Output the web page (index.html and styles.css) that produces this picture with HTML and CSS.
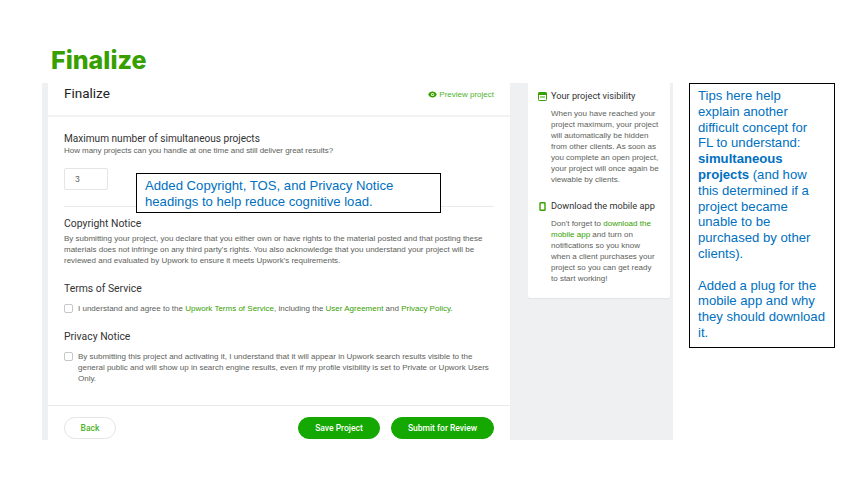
FILE: index.html
```html
<!DOCTYPE html>
<html lang="en">
  <head>
    <meta charset="UTF-8" />
    <meta name="viewport" content="width=device-width, initial-scale=1.0" />
    <title>Finalize</title>
    <link rel="stylesheet" href="styles.css">
  </head>
  <body>
    <div class="slide">
      <h1 class="slide-title">Finalize</h1>
      <div class="shot">
        <div class="main">
          <div class="main-header">
            <h2>Finalize</h2>
            <a class="preview">
              <svg width="9" height="7" viewBox="0 0 18 14"><path d="M9 1C5 1 2 3.500 0.500 7 2 10.500 5 13 9 13s7-2.500 8.500-6C16 3.500 13 1 9 1z" fill="#37a000"/><circle cx="9" cy="7" r="3.200" fill="#fff"/><circle cx="9" cy="7" r="1.600" fill="#37a000"/></svg>
              Preview project
            </a>
          </div>
          <div class="section max-projects">
            <h3>Maximum number of simultaneous projects</h3>
            <p class="sub">How many projects can you handle at one time and still deliver great results?</p>
            <div class="number-box">3</div>
          </div>
          <div class="section notices">
            <h3>Copyright Notice</h3>
            <p class="copy">By submitting your project, you declare that you either own or have rights to the material posted and that posting these materials does not infringe on any third party's rights. You also acknowledge that you understand your project will be reviewed and evaluated by Upwork to ensure it meets Upwork's requirements.</p>
            <h3 class="terms-head">Terms of Service</h3>
            <div class="check-row">
              <span class="checkbox"></span>
              <p class="copy">I understand and agree to the <a>Upwork Terms of Service</a>, including the <a>User Agreement</a> and <a>Privacy Policy</a>.</p>
            </div>
            <h3 class="privacy-head">Privacy Notice</h3>
            <div class="check-row">
              <span class="checkbox"></span>
              <p class="copy">By submitting this project and activating it, I understand that it will appear in Upwork search results visible to the general public and will show up in search engine results, even if my profile visibility is set to Private or Upwork Users Only.</p>
            </div>
          </div>
          <div class="actions">
            <button class="btn btn-back">Back</button>
            <div class="actions-right">
              <button class="btn btn-save">Save Project</button>
              <button class="btn btn-submit">Submit for Review</button>
            </div>
          </div>
        </div>
        <div class="side">
          <div class="tips">
            <div class="tip">
              <h4>
                <svg width="9" height="9" viewBox="0 0 9 9"><rect x="0.500" y="0.500" width="8" height="8" rx="0.800" fill="none" stroke="#37a000"/><rect x="0.500" y="0.500" width="8" height="2.500" fill="#37a000"/><rect x="2" y="4.500" width="5" height="1" fill="#37a000"/></svg>
                Your project visibility
              </h4>
              <p>When you have reached your project maximum, your project will automatically be hidden from other clients. As soon as you complete an open project, your project will once again be viewable by clients.</p>
            </div>
            <div class="tip tip-app">
              <h4>
                <svg width="9" height="9" viewBox="0 0 9 9"><rect x="2" y="0.700" width="5" height="7.600" rx="0.600" fill="none" stroke="#37a000" stroke-width="1.400"/></svg>
                Download the mobile app
              </h4>
              <p>Don't forget to <a>download the mobile app</a> and turn on notifications so you know when a client purchases your project so you can get ready to start working!</p>
            </div>
          </div>
        </div>
      </div>
      <div class="callout callout-headings">Added Copyright, TOS, and Privacy Notice headings to help reduce cognitive load.</div>
      <div class="callout callout-tips">
        <p>Tips here help<br>explain another<br>difficult concept for<br>FL to understand: <b>simultaneous projects</b> (and how this determined if a project became unable to be purchased by other clients).</p>
        <p>Added a plug for the mobile app and why they should download it.</p>
      </div>
    </div>
  </body>
</html>
```

FILE: styles.css
```css
* {
  box-sizing: border-box;
}
body {
  margin: 0;
  background: #fff;
  font-family: "Liberation Sans", Arial, sans-serif;
}
p,
h1,
h2,
h3,
h4 {
  margin: 0;
}
.slide {
  position: relative;
  width: 856px;
  height: 483px;
  overflow: hidden;
}
.slide-title {
  padding: 44px 0 0 51px;
  height: 83px;
  font-family: Inter, sans-serif;
  font-size: 25px;
  line-height: 32px;
  font-weight: 800;
  color: #37a000;
}
.shot {
  display: flex;
  width: 631px;
  height: 357px;
  margin-left: 42px;
  background: #eff0f2;
}
.main {
  width: 462px;
  margin-left: 6px;
  background: #fff;
  display: flex;
  flex-direction: column;
}
.main-header {
  display: flex;
  justify-content: space-between;
  align-items: center;
  height: 34px;
  padding: 0 16px 8px;
  border-bottom: 2px solid #f1f2f3;
}
.main-header h2 {
  font-family: Roboto, Arial, sans-serif;
  font-size: 13.500px;
  font-weight: 400;
  color: #222;
  margin-top: -4px;
}
.preview {
  display: flex;
  align-items: center;
  gap: 2px;
  font-size: 8px;
  color: #4fb32b;
  margin-top: -1px;
}
.section {
  padding: 0 16px;
}
h3 {
  font-family: Roboto, Arial, sans-serif;
  font-size: 10.400px;
  line-height: 14px;
  font-weight: 400;
  color: #333;
}
.max-projects {
  height: 89px;
  padding-top: 15px;
}
.max-projects h3 {
  font-size: 10.100px;
}
.max-projects .sub {
  font-size: 8px;
  line-height: 10px;
  letter-spacing: -0.040px;
  color: #5c615a;
}
.number-box {
  width: 44px;
  height: 22px;
  margin-top: 12px;
  padding-left: 10px;
  border: 1px solid #e4e5e6;
  border-radius: 2px;
  font-size: 8.500px;
  line-height: 20px;
  color: #5c615a;
}
.notices {
  flex: 1;
  margin: 0 16px;
  padding: 10px 0 0;
  border-top: 1px solid #e9eaeb;
}
.copy {
  font-size: 8px;
  line-height: 11px;
  color: #5c615a;
  margin-top: 2px;
}
.copy a,
.tip a {
  color: #37a000;
}
.terms-head {
  margin-top: 16px;
}
.privacy-head {
  margin-top: 16px;
}
.check-row {
  display: flex;
  gap: 5px;
  margin-top: 7px;
}
.check-row .copy {
  margin-top: 0;
}
.checkbox {
  flex: none;
  width: 9px;
  height: 9px;
  margin-top: 1px;
  border: 1px solid #c4c6c8;
  border-radius: 2px;
  background: #fff;
}
.actions {
  display: flex;
  justify-content: space-between;
  align-items: flex-start;
  height: 35px;
  padding: 11px 16px 0;
  border-top: 1px solid #e9eaeb;
}
.actions-right {
  display: flex;
  gap: 11px;
}
.btn {
  height: 22px;
  padding: 0;
  border-radius: 11px;
  font-family: Roboto, Arial, sans-serif;
  font-size: 8.500px;
  font-weight: 500;
  border: 1px solid #14a800;
  background: #14a800;
  color: #fff;
}
.btn-back {
  width: 52px;
  background: #fff;
  border-color: #e4e5e6;
  color: #4fb32b;
}
.btn-save {
  width: 82px;
}
.btn-submit {
  width: 103px;
}
.side {
  flex: 1;
  padding-left: 18px;
}
.tips {
  width: 142px;
  height: 215px;
  padding-left: 23px;
  padding-right: 10px;
  background: #fff;
  border-radius: 0 0 2px 2px;
  box-shadow: 0 1px 1px rgba(0, 0, 0, 0.05);
}
.tip h4 {
  display: flex;
  align-items: center;
  gap: 4px;
  margin-left: -13px;
  font-family: Roboto, Arial, sans-serif;
  font-size: 9.200px;
  line-height: 12px;
  font-weight: 400;
  color: #333;
}
.tip {
  padding-top: 7px;
}
.tip-app {
  padding-top: 15px;
}
.tip p {
  margin-top: 6px;
  font-size: 8px;
  line-height: 11px;
  color: #5c615a;
}
.callout {
  position: absolute;
  background: #fff;
  border: 1px solid #000;
  font-family: "Liberation Sans", Arial, sans-serif;
  color: #0070c0;
  font-size: 13.140px;
}
.callout-headings {
  left: 136px;
  top: 173px;
  width: 305px;
  height: 40px;
  padding: 4px 8px;
  line-height: 16px;
}
.callout-tips {
  left: 689px;
  top: 83px;
  width: 146px;
  height: 265px;
  padding: 4px 6px 0 8px;
  line-height: 15.800px;
}
.callout-tips p + p {
  margin-top: 15.800px;
}
```
